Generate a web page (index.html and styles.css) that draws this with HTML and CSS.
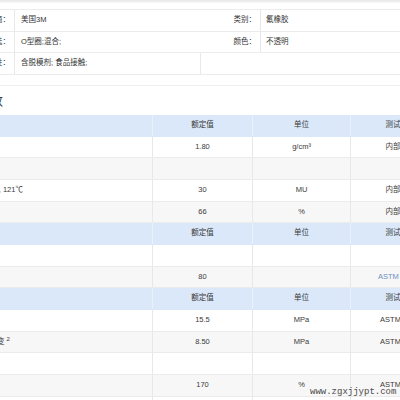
FILE: index.html
```html
<!DOCTYPE html>
<html lang="zh">
<head>
<meta charset="utf-8">
<title>3M 氟橡胶 物性参数</title>
<link rel="stylesheet" href="styles.css">
</head>
<body>
<div class="topshade"></div>
<div class="page">
  <div class="info">
    <div class="info-row">
      <div class="label">制造商：</div>
      <div class="val">美国3M</div>
      <div class="label label2">类别：</div>
      <div class="val val2">氟橡胶</div>
    </div>
    <div class="info-row">
      <div class="label">加工方法：</div>
      <div class="val">O型圈;混合;</div>
      <div class="label label2">颜色：</div>
      <div class="val val2">不透明</div>
    </div>
    <div class="info-row">
      <div class="label">特性：</div>
      <div class="val">含脱模剂; 食品接触;</div>
      <div class="val rest"></div>
    </div>
  </div>

  <section class="props">
    <h2 class="title">物性参数</h2>
    <div class="tbl">
      <div class="row head"><div class="c1"></div><div class="c">额定值</div><div class="c">单位</div><div class="c">测试方法</div></div>
      <div class="row"><div class="c1">比重</div><div class="c">1.80</div><div class="c">g/cm³</div><div class="c">内部方法</div></div>
      <div class="row alt"><div class="c1"></div><div class="c"></div><div class="c"></div><div class="c"></div></div>
      <div class="row"><div class="c1">门尼粘度 ML1+4, 121℃</div><div class="c">30</div><div class="c">MU</div><div class="c">内部方法</div></div>
      <div class="row alt"><div class="c1">氟含量</div><div class="c">66</div><div class="c">%</div><div class="c">内部方法</div></div>

      <div class="row head"><div class="c1"></div><div class="c">额定值</div><div class="c">单位</div><div class="c">测试方法</div></div>
      <div class="row"><div class="c1"></div><div class="c"></div><div class="c"></div><div class="c"></div></div>
      <div class="row alt"><div class="c1">邵氏硬度</div><div class="c">80</div><div class="c"></div><div class="c link">ASTM D2240</div></div>

      <div class="row head"><div class="c1"></div><div class="c">额定值</div><div class="c">单位</div><div class="c">测试方法</div></div>
      <div class="row"><div class="c1">拉伸强度</div><div class="c">15.5</div><div class="c">MPa</div><div class="c">ASTM D412</div></div>
      <div class="row alt"><div class="c1">应力 @100% 应变 <sup>2</sup></div><div class="c">8.50</div><div class="c">MPa</div><div class="c">ASTM D412</div></div>
      <div class="row"><div class="c1"></div><div class="c"></div><div class="c"></div><div class="c"></div></div>
      <div class="row alt"><div class="c1">断裂伸长率</div><div class="c">170</div><div class="c">%</div><div class="c">ASTM D412</div></div>
      <div class="row"><div class="c1"></div><div class="c"></div><div class="c"></div><div class="c"></div></div>
    </div>
  </section>

  <div class="watermark">www.zgxjjypt.com</div>
</div>
</body>
</html>
```

FILE: styles.css
```css
html, body {
  margin: 0;
  padding: 0;
  overflow: hidden;
  background: #fff;
}

body {
  font-family: "Liberation Sans", "Noto Sans CJK SC", sans-serif;
  font-size: 7.5px;
  color: #3a3a3a;
}

.topshade {
  height: 3px;
  background: linear-gradient(#e6e6e6, #f8f8f8);
}

.page {
  position: relative;
  width: 510px;
  margin-left: -60px;
}

/* info table */
.info {
  margin-top: 6px;
  border-top: 1px solid #ececec;
}

.info-row {
  display: grid;
  grid-template-columns: 75px 185px 60px 1fr;
  height: 21.5px;
  box-sizing: border-box;
  border-bottom: 1px solid #ececec;
  line-height: 20.5px;
}

.label {
  text-align: right;
  padding-right: 4px;
  border-right: 1px solid #e8e8e8;
  color: #333;
}

.label2 {
  border-right: 0;
}

.val {
  padding-left: 6px;
  color: #333;
}

.val2 {
  border-left: 1px solid #e8e8e8;
  padding-left: 5px;
}

.rest {
  grid-column: 3 / 5;
  border-left: 1px solid #e8e8e8;
}

/* properties */
.props {
  margin-top: 10.5px;
  border-top: 1px solid #eeeeee;
}

.title {
  margin: 0;
  height: 29px;
  line-height: 29px;
  padding-left: 11px;
  font-size: 13px;
  font-weight: normal;
  color: #34404c;
}

.row {
  display: grid;
  grid-template-columns: 212px 100px 98px 100px;
  height: 21.67px;
  box-sizing: border-box;
  border-bottom: 1px solid #ebebeb;
  line-height: 20.67px;
  background: #fff;
}

.row.alt {
  background: #f7f7f7;
}

.row.head {
  background: #dae8f9;
  border-bottom-color: #dae8f9;
}

.c1 {
  padding-left: 3.5px;
  white-space: nowrap;
  overflow: hidden;
}

.c1 sup {
  font-size: 6px;
  line-height: 0;
  vertical-align: 3px;
}

.c {
  text-align: center;
  border-left: 1px solid #e8e8e8;
  white-space: nowrap;
}

.head .c {
  border-left-color: #e9f1fb;
}

.link {
  color: #6f8fc0;
}

.watermark {
  position: absolute;
  left: 370px;
  top: 378px;
  font-family: "Liberation Mono", monospace;
  font-size: 9px;
  line-height: 10px;
  color: #4a4a4a;
}
```
